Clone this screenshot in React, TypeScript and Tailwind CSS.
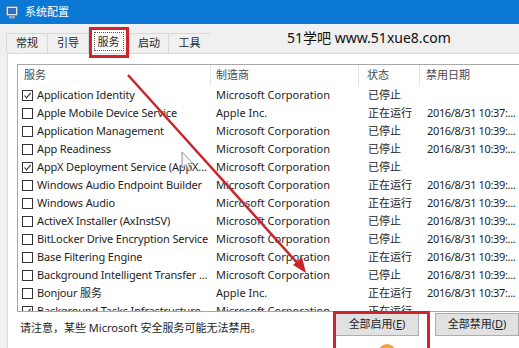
import { Fragment } from 'react';

type Row = {
  checked: boolean;
  name: string;
  maker: string;
  status: string;
  date: string;
};

const rows: Row[] = [
  { checked: true, name: 'Application Identity', maker: 'Microsoft Corporation', status: '已停止', date: '' },
  { checked: false, name: 'Apple Mobile Device Service', maker: 'Apple Inc.', status: '正在运行', date: '2016/8/31 10:37:...' },
  { checked: false, name: 'Application Management', maker: 'Microsoft Corporation', status: '已停止', date: '2016/8/31 10:39:...' },
  { checked: false, name: 'App Readiness', maker: 'Microsoft Corporation', status: '已停止', date: '2016/8/31 10:39:...' },
  { checked: true, name: 'AppX Deployment Service (AppX...', maker: 'Microsoft Corporation', status: '已停止', date: '' },
  { checked: false, name: 'Windows Audio Endpoint Builder', maker: 'Microsoft Corporation', status: '正在运行', date: '2016/8/31 10:39:...' },
  { checked: false, name: 'Windows Audio', maker: 'Microsoft Corporation', status: '正在运行', date: '2016/8/31 10:39:...' },
  { checked: false, name: 'ActiveX Installer (AxInstSV)', maker: 'Microsoft Corporation', status: '已停止', date: '2016/8/31 10:39:...' },
  { checked: false, name: 'BitLocker Drive Encryption Service', maker: 'Microsoft Corporation', status: '已停止', date: '2016/8/31 10:39:...' },
  { checked: false, name: 'Base Filtering Engine', maker: 'Microsoft Corporation', status: '正在运行', date: '2016/8/31 10:39:...' },
  { checked: false, name: 'Background Intelligent Transfer ...', maker: 'Microsoft Corporation', status: '已停止', date: '2016/8/31 10:39:...' },
  { checked: false, name: 'Bonjour 服务', maker: 'Apple Inc.', status: '正在运行', date: '2016/8/31 10:37:...' },
  { checked: true, name: 'Background Tasks Infrastructure ...', maker: 'Microsoft Corporation', status: '正在运行', date: '' },
];

const tabs = [
  { label: '常规', w: 'w-[41px]' },
  { label: '引导', w: 'w-[41px]' },
  { label: '服务', w: 'w-[41px]', active: true },
  { label: '启动', w: 'w-[39px]' },
  { label: '工具', w: 'w-[42px]' },
];

const Checkbox = ({ checked }: { checked: boolean }) => (
  <div className="flex h-[11px] w-[11px] shrink-0 items-center justify-center border border-[#333] bg-white">
    {checked && (
      <svg width="9" height="9" viewBox="0 0 9 9">
        <path d="M1.5 4.5 L3.6 6.8 L7.6 1.8" fill="none" stroke="#333" strokeWidth="1.1" />
      </svg>
    )}
  </div>
);

const App = () => {
  return (
    <div className="relative flex h-[348px] w-[519px] flex-col overflow-hidden bg-[#f0f0f0] font-['Noto_Sans','Noto_Sans_CJK_SC',sans-serif] text-[11px] text-[#1e1e1e]">
      {/* title bar */}
      <div className="flex h-[24px] shrink-0 items-center bg-[#0b78d3] pl-[6px]">
        <svg width="12" height="13" viewBox="0 0 12 13">
          <rect x="0.5" y="0.5" width="11" height="9" rx="1" fill="#dfe6ee" stroke="#7d8da0" />
          <rect x="2" y="2" width="8" height="6" fill="#2f6fc0" />
          <rect x="3" y="10" width="6" height="2.5" fill="#9aa7b6" />
        </svg>
        <span className="ml-[7px] text-[11px] text-white">系统配置</span>
      </div>

      {/* tabs */}
      <div className="flex h-[29px] shrink-0 items-end pl-[6px]">
        {tabs.map((t) =>
          t.active ? (
            <div
              key={t.label}
              className={`${t.w} -mb-px flex h-[26px] items-center justify-center border-x border-t border-[#d9d9d9] bg-white`}
            >
              <span className="border border-dotted border-[#555] px-[3px] leading-[17px]">{t.label}</span>
            </div>
          ) : (
            <div
              key={t.label}
              className={`${t.w} flex h-[20px] items-center justify-center border-l border-t border-[#d9d9d9] last:border-r`}
            >
              {t.label}
            </div>
          )
        )}
        <div className="mb-[2px] ml-[77px] self-center text-[14px] text-[#111]">51学吧 www.51xue8.com</div>
      </div>

      {/* panel */}
      <div className="ml-[7px] flex flex-1 flex-col border-l border-t border-[#d9d9d9] bg-white pl-[9px] pt-[10px]">
        <div className="h-[248px] w-[520px] shrink-0 overflow-hidden border border-[#a8a8a8]">
          <div className="flex h-[21px] items-center text-[#4a4a4a]">
            <div className="flex h-full w-[193px] shrink-0 items-center border-r border-[#e5e5e5] pl-[6px]">服务</div>
            <div className="flex h-full w-[148px] shrink-0 items-center border-r border-[#e5e5e5] pl-[5px]">制造商</div>
            <div className="flex h-full w-[61px] shrink-0 items-center border-r border-[#e5e5e5] pl-[8px]">状态</div>
            <div className="flex h-full shrink-0 items-center pl-[6px]">禁用日期</div>
          </div>
          {rows.map((r, i) => (
            <Fragment key={i}>
              <div className="flex h-[18px] items-center whitespace-nowrap">
                <div className="flex w-[193px] shrink-0 items-center pl-[4px]">
                  <Checkbox checked={r.checked} />
                  <span className="ml-[4px] overflow-hidden tracking-[-0.15px]">{r.name}</span>
                </div>
                <div className="w-[148px] shrink-0 pl-[5px]">{r.maker}</div>
                <div className="w-[61px] shrink-0 pl-[9px]">{r.status}</div>
                <div className="shrink-0 pl-[7px] tracking-[-0.35px]">{r.date}</div>
              </div>
            </Fragment>
          ))}
        </div>

        <div className="flex items-start">
          <div className="mt-[8px] pl-[3px]">请注意，某些 Microsoft 安全服务可能无法禁用。</div>
          <div className="ml-auto mt-[1px] flex gap-[16px]">
            <button className="flex h-[23px] w-[84px] items-center justify-center border border-[#adadad] bg-[#e1e1e1]">
              全部启用(<span className="underline">E</span>)
            </button>
            <button className="flex h-[23px] w-[84px] items-center justify-center border border-[#adadad] bg-[#e1e1e1]">
              全部禁用(<span className="underline">D</span>)
            </button>
          </div>
        </div>
      </div>

      {/* annotations */}
      <div className="pointer-events-none absolute left-[89px] top-[27px] h-[31px] w-[40px] border-[3px] border-[#d1232a]" />
      <div className="pointer-events-none absolute left-[333px] top-[311px] h-[45px] w-[97px] border-[3px] border-[#d1232a]" />
      <div className="pointer-events-none absolute left-[378px] top-[344px] h-[18px] w-[18px] rounded-full bg-[#f5a23a]" />
      <svg className="pointer-events-none absolute left-0 top-0" width="519" height="348" viewBox="0 0 519 348">
        <line x1="128" y1="75" x2="300" y2="266" stroke="#c9262c" strokeWidth="2.5" />
        <polygon points="306,273 293,265 302,257" fill="#c9262c" />
        <path
          d="M182 152 L182 168 L186 164.5 L189 171 L191.2 170 L188.3 163.6 L193 163.6 Z"
          fill="#f8f8f8"
          stroke="#777"
          strokeWidth="0.8"
        />
      </svg>
    </div>
  );
};

export default App;
